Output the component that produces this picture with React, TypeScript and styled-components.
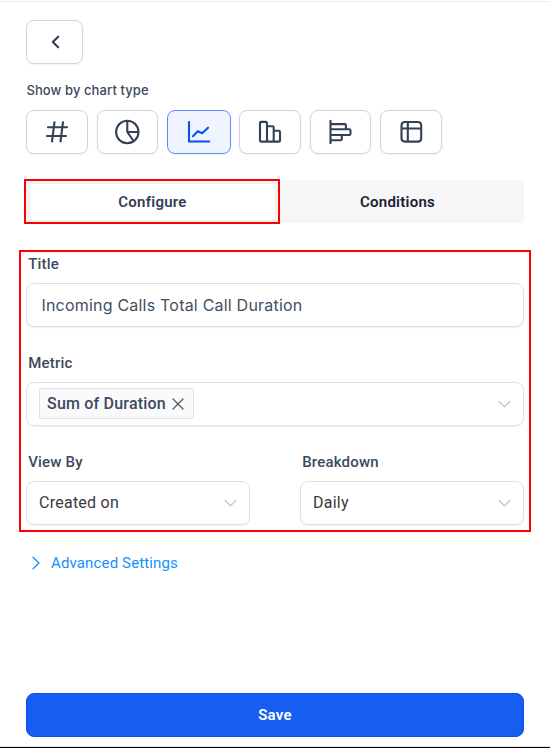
import React, { useState } from "react";
import styled, { createGlobalStyle, css } from "styled-components";

const GlobalStyle = createGlobalStyle`
  *, *::before, *::after { box-sizing: border-box; }
  body { margin: 0; background: #fff; }
  button, input { font: inherit; margin: 0; }
`;

const Panel = styled.main`
  display: flex;
  flex-direction: column;
  width: 550px;
  height: 748px;
  padding: 18px 26px 10px;
  background: #fff;
  border-top: 1px solid #fff;
  border-bottom: 1px solid #000;
  box-shadow: inset 0 1px 0 #ececef, inset 0 -1px 0 #e4e4e6;
  font-family: Roboto, "Liberation Sans", sans-serif;
  color: #3d495c;
`;

const outline = css`
  border: 1px solid #d2d4e0;
  border-radius: 8px;
  box-shadow: 0 1px 2px rgba(16, 24, 40, 0.06);
`;

const IconButton = styled.button<{ $width: number; $active?: boolean }>`
  ${outline}
  display: flex;
  align-items: center;
  justify-content: center;
  flex: none;
  width: ${(p) => p.$width}px;
  height: 44px;
  padding: 0;
  color: #344054;
  background: #fff;
  ${(p) =>
    p.$active &&
    css`
      color: #0452f4;
      background: #eff4ff;
      border-color: #5a8ff8;
    `}
`;

const BackButton = styled(IconButton)`
  margin-top: 1px;
  padding-left: 2px;
`;

const Caption = styled.div`
  height: 20px;
  margin: 16px 0 10px;
  padding-left: 0.4px;
  font: 500 13px/20px Inter, sans-serif;
  letter-spacing: 0.1px;
`;

const ChartTypes = styled.div`
  display: flex;
  justify-content: space-between;
  width: 416px;
`;

const Highlight = styled.div<{ $inset: string }>`
  position: relative;
  &::after {
    content: "";
    position: absolute;
    inset: ${(p) => p.$inset};
    border: 2px solid #fb0000;
    pointer-events: none;
  }
`;

const Tabs = styled.div`
  display: flex;
  height: 43px;
  margin-top: 26px;
  background: #f6f6f9;
  border-radius: 3px;
`;

const TabSlot = styled(Highlight)`
  width: 253px;
  padding: 4px;
`;

const Tab = styled.button<{ $active?: boolean }>`
  flex: 1;
  width: 100%;
  height: ${(p) => (p.$active ? "36px" : "43px")};
  padding: ${(p) => (p.$active ? "0" : "1px 8px 0 0")};
  border: 0;
  border-radius: 4px;
  background: ${(p) => (p.$active ? "#fff" : "transparent")};
  box-shadow: ${(p) => (p.$active ? "0 0 2px rgba(16, 24, 40, 0.12)" : "none")};
  color: ${(p) => (p.$active ? "#344054" : "#182230")};
  font-weight: 600;
  font-size: 15px;
  letter-spacing: 0.25px;
`;

const Form = styled(Highlight)`
  display: grid;
  grid-template-columns: 224px 224px;
  column-gap: 50px;
  row-gap: 27px;
  margin-top: 32px;
`;

const Field = styled.label<{ $wide?: boolean }>`
  display: block;
  grid-column: ${(p) => (p.$wide ? "1 / -1" : "auto")};
`;

const Label = styled.span`
  display: block;
  height: 20px;
  margin-bottom: 8px;
  padding-left: 2.2px;
  font-weight: 500;
  font-size: 15px;
  line-height: 18px;
  letter-spacing: 0.2px;
`;

const TextInput = styled.input`
  ${outline}
  display: block;
  width: 100%;
  height: 44px;
  padding: 0 14.4px;
  border-color: #dfe0e7;
  outline: 0;
  color: #434f61;
  background: #fff;
  font: 400 16px/24px Inter, sans-serif;
  letter-spacing: 0.21px;
`;

const SelectBox = styled.div`
  ${outline}
  display: flex;
  align-items: center;
  justify-content: space-between;
  height: 44px;
  padding: 0 12px 1px;
  border-color: #dfe0e7;
  color: #38393d;
  font-size: 16px;
  line-height: 19px;
  letter-spacing: 0.25px;
`;

const Tag = styled.span`
  display: flex;
  align-items: center;
  gap: 6px;
  height: 31px;
  padding: 0 9px 0 7px;
  border: 1px solid #dfe0e8;
  border-radius: 2px;
  background: #fafafc;
  color: #3d495c;
  font-weight: 500;
  letter-spacing: 0.2px;
`;

const Advanced = styled.button`
  display: flex;
  align-items: center;
  align-self: flex-start;
  gap: 10px;
  height: 24px;
  margin: 26px 0 0 5px;
  padding: 0;
  border: 0;
  background: none;
  color: #1491fb;
  font-size: 15px;
  letter-spacing: 0.14px;
`;

const SaveButton = styled.button`
  height: 44px;
  margin-top: auto;
  padding: 0;
  border: 1px solid #0a4ff0;
  border-radius: 8px;
  background: #155eef;
  color: #fff;
  font-weight: 600;
  font-size: 15px;
  letter-spacing: 0.25px;
`;

const Stroke = styled.svg`
  display: block;
  flex: none;
  fill: none;
  stroke: currentColor;
  stroke-width: 2.1;
  stroke-linecap: round;
  stroke-linejoin: round;
`;

const Muted = styled(Stroke)`
  color: #bfbfbf;
  stroke-width: 1.2;
`;

const Cross = styled(Stroke)`
  color: #555960;
  stroke-width: 1.3;
`;

const ThinStroke = styled(Stroke)`
  stroke-width: 1.3;
`;

const Chevron = () => (
  <Muted width="13" height="8" viewBox="0 0 13 8">
    <path d="M1.2 1.5 6.5 6.8 11.8 1.5" />
  </Muted>
);

const chartTypes = [
  { id: "number", width: 62, path: "M4 8.2H23M3 17H22M10.5 3.2 8 22.5M19 3.2 16.5 22.5" },
  {
    id: "pie",
    width: 61,
    path: "M24.5 13A11.2 11.2 0 1 1 2.1 13A11.2 11.2 0 0 1 24.5 13M13.3 2V13H24.3M13.3 13 19.6 22",
  },
  { id: "line", width: 64, path: "M3 3V22.5H23.3M7 17.3 11.7 12.2 16.2 14.3 22 8.7" },
  {
    id: "column",
    width: 62,
    path: "M4 2.9H8.4Q10 2.9 10 4.5V22.6H4Q3 22.6 3 21.6V3.9Q3 2.9 4 2.9M10 7.2H15.4Q16.7 7.2 16.7 8.5V22.6H10M16.7 11.7H21.8Q23 11.7 23 12.9V21.4Q23 22.6 21.8 22.6H16.7",
  },
  {
    id: "bar",
    width: 61,
    path: "M2.5 1.8V24.2M2.5 5.1H16.7Q17.9 5.1 17.9 6.3V10.2M2.5 10.2H21.3Q22.5 10.2 22.5 11.4V14.8Q22.5 16 21.3 16H2.5M13.8 16V20.1Q13.8 21.3 12.6 21.3H2.5",
  },
  {
    id: "table",
    width: 62,
    path: "M7 3H19.8Q23.2 3 23.2 6.4V19.2Q23.2 22.6 19.8 22.6H7Q3.5 22.6 3.5 19.2V6.4Q3.5 3 7 3M3.5 9.5H23.2M9.8 3V22.6",
  },
];

export default function App() {
  const [title, setTitle] = useState("Incoming Calls Total Call Duration");
  const [chart, setChart] = useState("line");

  return (
    <>
      <GlobalStyle />
      <Panel>
        <BackButton $width={57} aria-label="Back">
          <Stroke width="12" height="16" viewBox="0 0 12 16">
            <path d="M8.2 2.7 2.8 8 8.2 13.3" />
          </Stroke>
        </BackButton>
        <Caption>Show by chart type</Caption>
        <ChartTypes>
          {chartTypes.map((t) => (
            <IconButton
              key={t.id}
              $width={t.width}
              $active={t.id === chart}
              aria-label={t.id}
              onClick={() => setChart(t.id)}
            >
              <Stroke width="26" height="26" viewBox="0 0 26 26">
                <path d={t.path} />
              </Stroke>
            </IconButton>
          ))}
        </ChartTypes>
        <Tabs>
          <TabSlot $inset="-1px -1px -1px -2px">
            <Tab $active>Configure</Tab>
          </TabSlot>
          <Tab>Conditions</Tab>
        </Tabs>
        <Form $inset="-5px -7px -7px -7px">
          <Field $wide>
            <Label>Title</Label>
            <TextInput value={title} onChange={(e) => setTitle(e.target.value)} />
          </Field>
          <Field $wide as="div">
            <Label>Metric</Label>
            <SelectBox>
              <Tag>
                Sum of Duration
                <Cross width="12" height="12" viewBox="0 0 12 12">
                  <path d="M1 1 11 11M11 1 1 11" />
                </Cross>
              </Tag>
              <Chevron />
            </SelectBox>
          </Field>
          <Field as="div">
            <Label>View By</Label>
            <SelectBox>
              Created on
              <Chevron />
            </SelectBox>
          </Field>
          <Field as="div">
            <Label>Breakdown</Label>
            <SelectBox>
              Daily
              <Chevron />
            </SelectBox>
          </Field>
        </Form>
        <Advanced>
          <ThinStroke width="10" height="14" viewBox="0 0 10 14">
            <path d="M2 1.3 8 7 2 12.7" />
          </ThinStroke>
          Advanced Settings
        </Advanced>
        <SaveButton>Save</SaveButton>
      </Panel>
    </>
  );
}
